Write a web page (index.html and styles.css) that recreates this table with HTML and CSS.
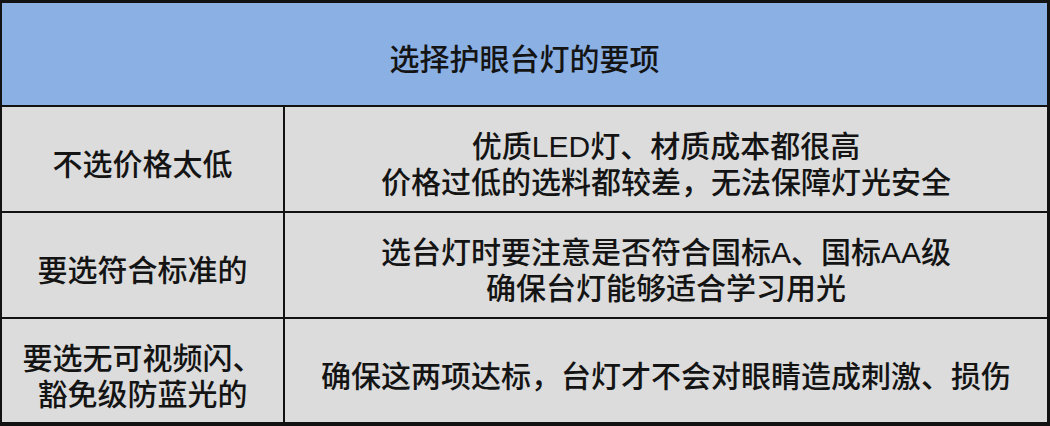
FILE: index.html
```html
<!DOCTYPE html>
<html lang="zh-CN">
<head>
<meta charset="utf-8">
<title>选择护眼台灯的要项</title>
<link rel="stylesheet" href="styles.css">
</head>
<body>
<div class="table">
  <div class="cell head">选择护眼台灯的要项</div>
  <div class="cell">不选价格太低</div>
  <div class="cell">
    <div>优质LED灯、材质成本都很高</div>
    <div>价格过低的选料都较差，无法保障灯光安全</div>
  </div>
  <div class="cell">要选符合标准的</div>
  <div class="cell">
    <div>选台灯时要注意是否符合国标A、国标AA级</div>
    <div>确保台灯能够适合学习用光</div>
  </div>
  <div class="cell">
    <div>要选无可视频闪、</div>
    <div>豁免级防蓝光的</div>
  </div>
  <div class="cell">确保这两项达标，台灯才不会对眼睛造成刺激、损伤</div>
</div>
</body>
</html>
```

FILE: styles.css
```css
html, body {
  margin: 0;
  padding: 0;
  background: #ffffff;
}

.table {
  box-sizing: border-box;
  width: 1050px;
  height: 426px;
  background: #121212;
  padding: 3px 3px 4px 2px;
  display: grid;
  grid-template-columns: 281px 762px;
  grid-template-rows: 102px 104px 104px 103px;
  gap: 2px;
  font-family: "Liberation Sans", "Noto Sans CJK SC", sans-serif;
  font-size: 30px;
  font-weight: 500;
  line-height: 36px;
  color: #141414;
}

.cell {
  background: #dcdcdc;
  display: flex;
  flex-direction: column;
  justify-content: center;
  align-items: center;
  text-align: center;
  padding-top: 12px;
  box-sizing: border-box;
  white-space: nowrap;
}

.head {
  grid-column: 1 / 3;
  background: #8ab0e4;
  padding-top: 11px;
}
```
